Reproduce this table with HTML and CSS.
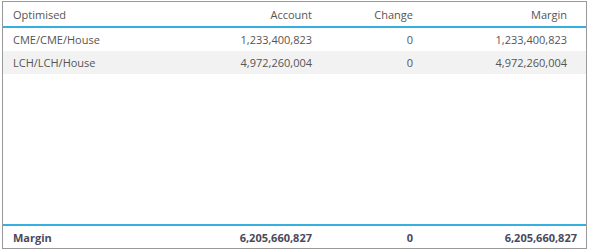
FILE: index.html
```html
<!DOCTYPE html>
<html lang="en">
<head>
  <meta charset="UTF-8" />
  <title>Margin</title>
  <link rel="stylesheet" href="styles.css">
</head>
<body>
  <div class="grid-panel">
    <div class="row head">
      <div>Optimised</div>
      <div class="num">Account</div>
      <div class="num">Change</div>
      <div class="num">Margin</div>
    </div>
    <div class="body">
      <div class="row">
        <div>CME/CME/House</div>
        <div class="num">1,233,400,823</div>
        <div class="num">0</div>
        <div class="num">1,233,400,823</div>
      </div>
      <div class="row alt">
        <div>LCH/LCH/House</div>
        <div class="num">4,972,260,004</div>
        <div class="num">0</div>
        <div class="num">4,972,260,004</div>
      </div>
    </div>
    <div class="row total">
      <div>Margin</div>
      <div class="num">6,205,660,827</div>
      <div class="num">0</div>
      <div class="num">6,205,660,827</div>
    </div>
  </div>
</body>
</html>
```

FILE: styles.css
```css
body {
  margin: 0;
  padding: 1px 0 0 2px;
  font-family: 'Open Sans', sans-serif;
  font-size: 11px;
  color: #555;
  background: #fff;
}
.grid-panel {
  width: 583px;
  height: 246px;
  border: 1px solid #999;
  display: flex;
  flex-direction: column;
}
.row {
  display: grid;
  grid-template-columns: 1fr 100px 101px 154px;
  align-items: center;
  height: 23px;
  padding: 0 19px 0 10px;
}
.num { text-align: right; }
.head {
  height: 24px;
  border-bottom: 2px solid #35b0e0;
}
.body { flex: 1; }
.alt { background: #f2f2f2; }
/* footer has no scrollbar gutter, last column runs wider */
.total {
  height: 22px;
  grid-template-columns: 1fr 100px 101px 164px;
  padding-right: 9px;
  border-top: 2px solid #35b0e0;
  font-weight: bold;
  color: #4a4a5c;
}
```
